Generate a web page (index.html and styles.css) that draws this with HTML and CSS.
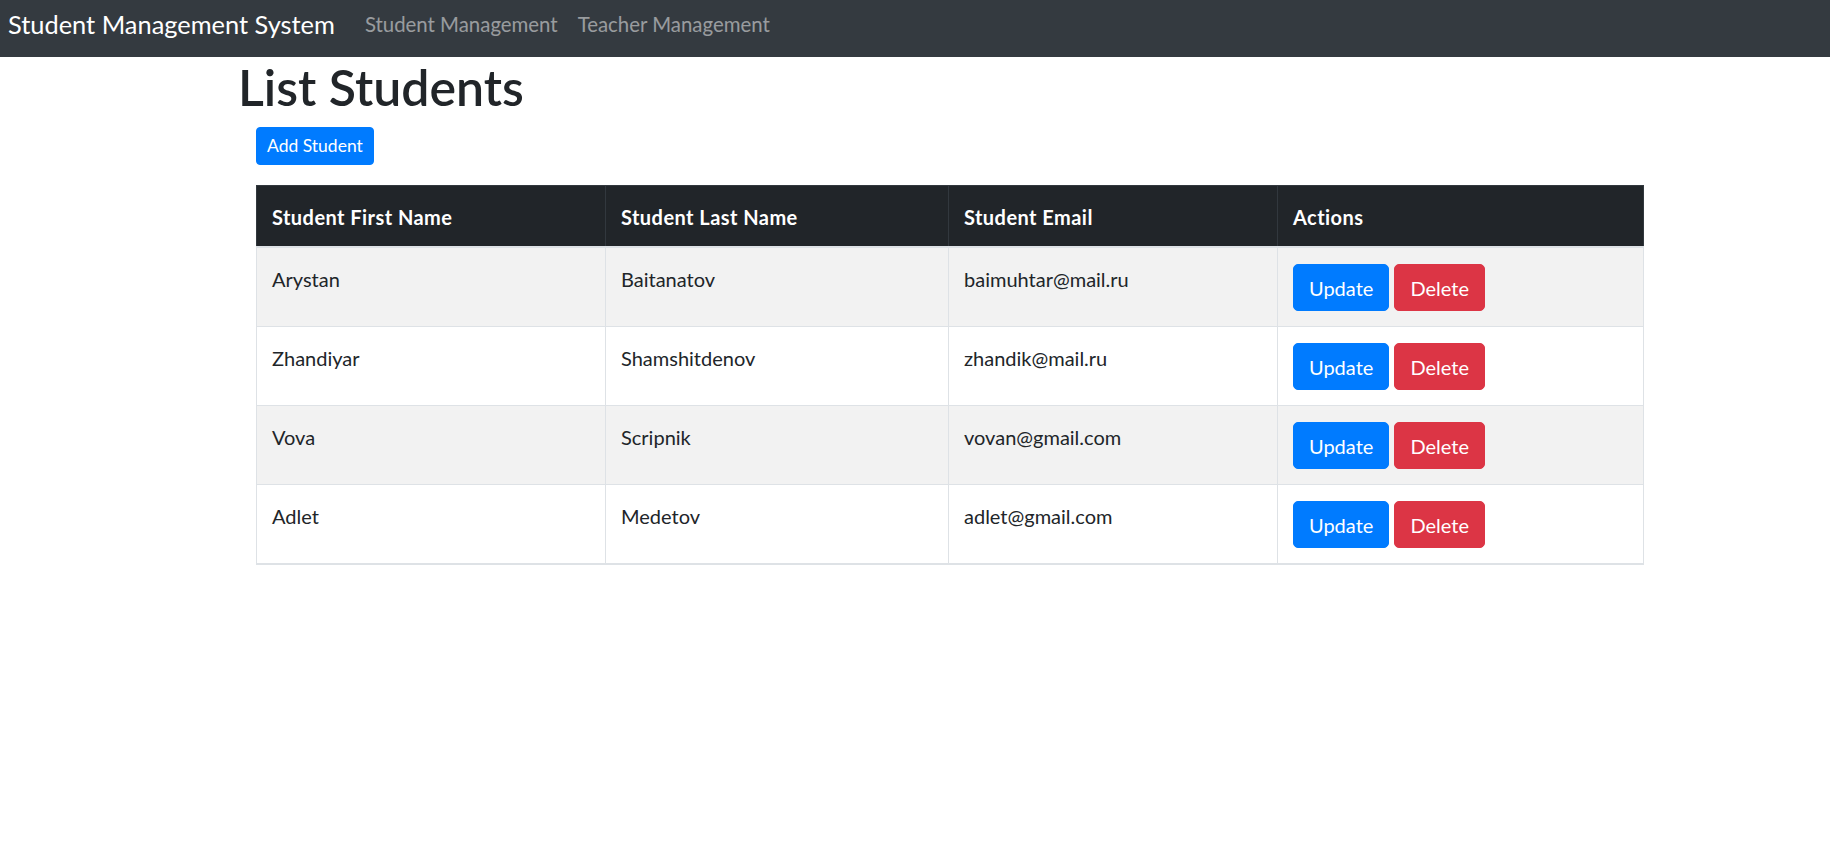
FILE: index.html
```html
<!DOCTYPE html>
<html lang="en">
<head>
<meta charset="utf-8">
<title>Student Management System</title>
<link rel="stylesheet" href="styles.css">
</head>
<body>
<header class="navbar">
  <a class="brand" href="#">Student Management System</a>
  <nav class="nav">
    <a class="nav-link" href="#">Student Management</a>
    <a class="nav-link" href="#">Teacher Management</a>
  </nav>
</header>
<main class="page">
  <h1 class="title">List Students</h1>
  <div class="content">
    <div class="toolbar">
      <button class="btn btn-primary btn-sm">Add Student</button>
    </div>
    <table class="table">
      <colgroup>
        <col class="c1"><col class="c2"><col class="c3"><col class="c4">
      </colgroup>
      <thead>
        <tr>
          <th>Student First Name</th>
          <th>Student Last Name</th>
          <th>Student Email</th>
          <th>Actions</th>
        </tr>
      </thead>
      <tbody>
        <tr class="odd">
          <td>Arystan</td>
          <td>Baitanatov</td>
          <td>baimuhtar@mail.ru</td>
          <td><button class="btn btn-primary">Update</button> <button class="btn btn-danger">Delete</button></td>
        </tr>
        <tr>
          <td>Zhandiyar</td>
          <td>Shamshitdenov</td>
          <td>zhandik@mail.ru</td>
          <td><button class="btn btn-primary">Update</button> <button class="btn btn-danger">Delete</button></td>
        </tr>
        <tr class="odd">
          <td>Vova</td>
          <td>Scripnik</td>
          <td>vovan@gmail.com</td>
          <td><button class="btn btn-primary">Update</button> <button class="btn btn-danger">Delete</button></td>
        </tr>
        <tr>
          <td>Adlet</td>
          <td>Medetov</td>
          <td>adlet@gmail.com</td>
          <td><button class="btn btn-primary">Update</button> <button class="btn btn-danger">Delete</button></td>
        </tr>
      </tbody>
    </table>
  </div>
</main>
</body>
</html>
```
FILE: styles.css
```css
* { box-sizing: border-box; }
html, body { margin: 0; padding: 0; }
body {
  font-family: Lato, "Open Sans", sans-serif;
  font-size: 20px;
  line-height: 1.5;
  color: #212529;
  background: #fff;
}
.navbar {
  display: flex;
  align-items: center;
  height: 57px;
  padding: 0 8px 9px;
  background: #343a40;
}
.brand {
  font-size: 25.4px;
  line-height: 37px;
  color: #fff;
  text-decoration: none;
  margin-right: 20px;
  white-space: nowrap;
}
.nav { display: flex; }
.nav-link {
  font-size: 20.4px;
  color: rgba(255,255,255,.5);
  text-decoration: none;
  padding: 0 10px;
  white-space: nowrap;
}
.page { padding-left: 238px; }
.title {
  margin: 0 0 10px;
  font-size: 50px;
  font-weight: 600;
  line-height: 1.2;
}
.content { padding-left: 18px; width: 1405px; }
.toolbar { margin-bottom: 20px; }
.btn {
  display: inline-block;
  font-family: inherit;
  font-size: 20px;
  line-height: 1.5;
  padding: 7.5px 15px;
  border: 1px solid transparent;
  border-radius: 5px;
  color: #fff;
  cursor: pointer;
}
.btn-sm {
  font-size: 17.5px;
  padding: 5px 10px;
  border-radius: 4px;
}
.btn-primary { background: #007bff; border-color: #007bff; }
.btn-danger { background: #dc3545; border-color: #dc3545; }
.table {
  width: 1387px;
  border-collapse: collapse;
  table-layout: fixed;
  border: 1px solid #dee2e6;
  border-bottom-width: 2px;
}
.c1 { width: 349px; }
.c2 { width: 343px; }
.c3 { width: 329px; }
.c4 { width: 366px; }
.table th, .table td {
  text-align: left;
  vertical-align: top;
  padding: 15px;
  border: 1px solid #dee2e6;
}
.table td { padding: 16px 15px 15px; }
.table thead th {
  background: #212529;
  color: #fff;
  font-weight: 700;
  letter-spacing: 0.45px;
  padding-top: 16px;
  padding-bottom: 14px;
  border-color: #32383e;
  border-bottom: 1px solid #32383e;
}
.table tbody tr:first-child td { border-top: 2px solid #dee2e6; }
.table tbody tr.odd td { background: #f2f2f2; }
```
